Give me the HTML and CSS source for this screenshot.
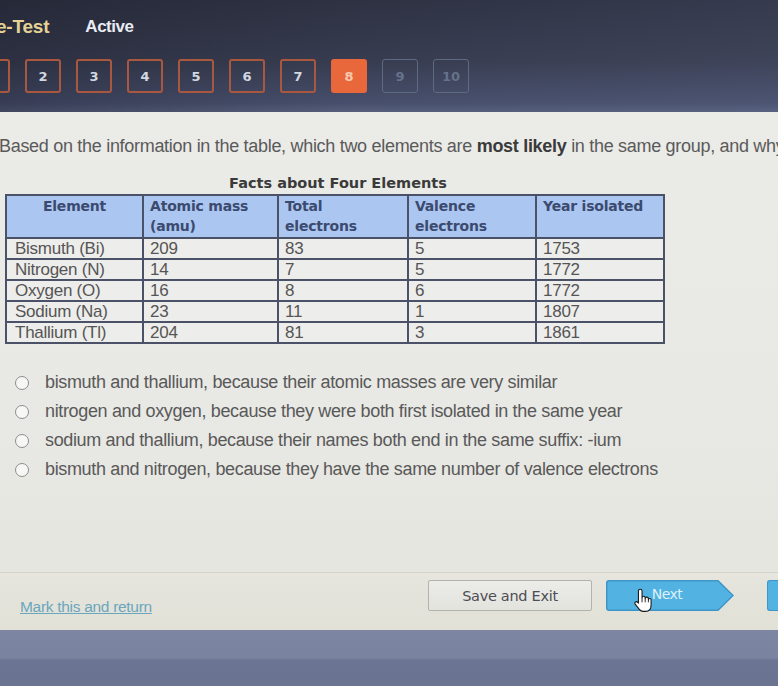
FILE: index.html
```html
<!DOCTYPE html>
<html>
<head>
<meta charset="utf-8">
<link rel="stylesheet" href="styles.css">
</head>
<body>
<div class="page">
  <header class="topbar">
    <div class="title-row">
      <span class="test-name">e-Test</span>
      <span class="status">Active</span>
    </div>
    <nav class="qnav">
      <span class="qbox">1</span>
      <span class="qbox">2</span>
      <span class="qbox">3</span>
      <span class="qbox">4</span>
      <span class="qbox">5</span>
      <span class="qbox">6</span>
      <span class="qbox">7</span>
      <span class="qbox current">8</span>
      <span class="qbox locked">9</span>
      <span class="qbox locked">10</span>
    </nav>
  </header>

  <main class="content">
    <p class="question">Based on the information in the table, which two elements are <b>most likely</b> in the same group, and why?</p>

    <div class="table-wrap">
      <div class="table-title">Facts about Four Elements</div>
      <table class="facts">
        <colgroup>
          <col class="w1"><col class="w2"><col class="w3"><col class="w4"><col class="w5">
        </colgroup>
        <thead>
          <tr>
            <th class="center">Element</th>
            <th>Atomic mass<br>(amu)</th>
            <th>Total<br>electrons</th>
            <th>Valence<br>electrons</th>
            <th>Year isolated</th>
          </tr>
        </thead>
        <tbody>
          <tr><td>Bismuth (Bi)</td><td>209</td><td>83</td><td>5</td><td>1753</td></tr>
          <tr><td>Nitrogen (N)</td><td>14</td><td>7</td><td>5</td><td>1772</td></tr>
          <tr><td>Oxygen (O)</td><td>16</td><td>8</td><td>6</td><td>1772</td></tr>
          <tr><td>Sodium (Na)</td><td>23</td><td>11</td><td>1</td><td>1807</td></tr>
          <tr><td>Thallium (Tl)</td><td>204</td><td>81</td><td>3</td><td>1861</td></tr>
        </tbody>
      </table>
    </div>

    <ul class="answers">
      <li><span class="radio"></span><span>bismuth and thallium, because their atomic masses are very similar</span></li>
      <li><span class="radio"></span><span>nitrogen and oxygen, because they were both first isolated in the same year</span></li>
      <li><span class="radio"></span><span>sodium and thallium, because their names both end in the same suffix: -ium</span></li>
      <li><span class="radio"></span><span>bismuth and nitrogen, because they have the same number of valence electrons</span></li>
    </ul>

    <div class="spacer"></div>

    <footer class="actions">
      <a class="mark" href="#">Mark this and return</a>
      <button class="btn-save">Save and Exit</button>
      <button class="btn-next">
        <svg class="next-shape" width="128" height="31" viewBox="0 0 128 31">
          <path d="M3 0.75 H112 L127 15.5 L112 30.25 H3 Q0.75 30.25 0.75 28 V3 Q0.75 0.75 3 0.75 Z" fill="#52b3e2" stroke="#3d95c8" stroke-width="1.5"/>
        </svg>
        <span class="next-label">Next</span>
        <svg class="cursor" width="19" height="25" viewBox="0 0 21 27">
          <path d="M6 3 A2 2 0 0 1 10 3 V10.5 A1.75 1.75 0 0 1 13.5 10.5 V11.5 A1.75 1.75 0 0 1 17 11.5 V12.8 A1.5 1.5 0 0 1 20 12.8 V18.5 C20 22.5 18 25.5 14 25.5 H11 C9 25.5 8 24.5 7 23.3 L2.4 17.6 C1.7 16.7 1.9 15.6 2.7 15.1 C3.5 14.6 4.6 14.8 5.3 15.6 L6 16.4 Z" fill="#fff" stroke="#1a1a1a" stroke-width="1.2" stroke-linejoin="round"/>
          <path d="M10 10.5 V15.5 M13.5 11.5 V15.5 M17 12.8 V15.5" stroke="#1a1a1a" stroke-width="1" fill="none"/>
        </svg>
      </button>
      <span class="btn-partial"></span>
    </footer>
  </main>

  <div class="below"></div>
</div>
</body>
</html>
```

FILE: styles.css
```css
html, body {
  margin: 0;
  padding: 0;
}
body {
  width: 778px;
  height: 686px;
  overflow: hidden;
  background: #6c7592;
  font-family: "Liberation Sans", Arial, sans-serif;
}
.page {
  display: flex;
  flex-direction: column;
  height: 686px;
}

/* ---------- top bar ---------- */
.topbar {
  height: 112px;
  flex: 0 0 112px;
  background:
    linear-gradient(90deg, rgba(20,22,34,0.35) 0%, rgba(20,22,34,0.05) 45%, rgba(90,100,130,0.15) 100%),
    linear-gradient(180deg, #2f3344 0%, #393e52 55%, #4a5270 92%, #59627f 100%);
  display: flex;
  flex-direction: column;
}
.title-row {
  height: 59px;
  display: flex;
  align-items: center;
  padding-bottom: 5px;
  box-sizing: border-box;
  font-weight: bold;
}
.test-name {
  margin-left: -4px;
  color: #e4d394;
  font-size: 19px;
  letter-spacing: -0.2px;
}
.status {
  margin-left: 36px;
  color: #e9ebf2;
  font-size: 17px;
  letter-spacing: -0.5px;
}
.qnav {
  display: flex;
  gap: 15px;
  margin-left: -26px;
}
.qbox {
  width: 36px;
  height: 34px;
  box-sizing: border-box;
  border: 2px solid #a9583f;
  border-radius: 3px;
  display: flex;
  align-items: center;
  justify-content: center;
  color: #d3d7e0;
  font-family: "DejaVu Sans", Verdana, sans-serif;
  font-weight: bold;
  font-size: 13px;
}
.qbox.current {
  background: #e8673b;
  border-color: #e8673b;
  color: #f6c7ae;
}
.qbox.locked {
  border-color: #5c6a82;
  color: #66728a;
  border-width: 1.5px;
}

/* ---------- content ---------- */
.content {
  flex: 0 0 518px;
  background: linear-gradient(180deg, #ebebe8 0%, #e8e8e4 60%, #e5e5df 100%);
  display: flex;
  flex-direction: column;
}
.question {
  margin: 0;
  padding-top: 23px;
  font-size: 18px;
  line-height: 22px;
  color: #5a5a5a;
  letter-spacing: -0.3px;
  white-space: nowrap;
  margin-left: -1px;
}
.question b {
  color: #3a3a3a;
}
.table-wrap {
  width: 658px;
  margin-left: 5px;
  margin-top: 17px;
}
.table-title {
  text-align: center;
  font-family: "DejaVu Sans", Verdana, sans-serif;
  font-size: 14.5px;
  font-weight: bold;
  color: #3a3a3a;
  line-height: 18px;
  margin-bottom: 2px;
  padding-left: 8px;
}
.facts {
  width: 658px;
  border-collapse: collapse;
  table-layout: fixed;
  border: 2px solid #4b5167;
}
.facts col.w1 { width: 137px; }
.facts col.w2 { width: 135px; }
.facts col.w3 { width: 130px; }
.facts col.w4 { width: 128px; }
.facts col.w5 { width: 128px; }
.facts th, .facts td {
  border: 2px solid #4b5167;
  text-align: left;
  vertical-align: top;
  overflow: hidden;
  white-space: nowrap;
}
.facts th {
  background: #abc6f1;
  color: #3b4a6e;
  font-family: "DejaVu Sans", Verdana, sans-serif;
  font-weight: bold;
  font-size: 14px;
  line-height: 20px;
  height: 40px;
  padding: 0 6px 1px 6px;
  letter-spacing: -0.2px;
}
.facts th.center {
  text-align: center;
}
.facts td {
  background: #ededeb;
  color: #555;
  font-size: 17px;
  line-height: 17px;
  height: 17px;
  padding: 1px 6px;
  letter-spacing: -0.25px;
}
.facts td:first-child {
  padding-left: 8px;
}

/* ---------- answers ---------- */
.answers {
  list-style: none;
  margin: 24px 0 0 0;
  padding: 0;
}
.answers li {
  height: 29px;
  display: flex;
  align-items: center;
  padding-left: 15px;
  font-size: 18px;
  color: #595959;
  letter-spacing: -0.35px;
}
.radio {
  width: 14px;
  height: 14px;
  box-sizing: border-box;
  border: 1.5px solid #8d8d8d;
  border-radius: 50%;
  background: #f7f7f5;
  margin-right: 16px;
  flex: 0 0 14px;
}
.spacer {
  flex: 1;
}

/* ---------- footer actions ---------- */
.actions {
  height: 58px;
  flex: 0 0 58px;
  box-sizing: border-box;
  border-top: 1px solid #d3d3cb;
  background: linear-gradient(180deg, #e6e5de 0%, #e2e1d7 100%);
  display: grid;
  grid-template-columns: 394px 164px 128px auto;
  column-gap: 14px;
  align-items: start;
  padding: 7px 0 0 20px;
}
.mark {
  margin-top: 18px;
  font-size: 15.5px;
  line-height: 18px;
  color: #6aa6bd;
  letter-spacing: -0.3px;
  text-decoration: underline;
}
.btn-save {
  height: 31px;
  box-sizing: border-box;
  border: 1px solid #b3b3ad;
  border-radius: 2px;
  background: linear-gradient(180deg, #ecece8 0%, #e3e3de 100%);
  color: #4d4d55;
  font-family: "DejaVu Sans", Verdana, sans-serif;
  font-size: 14.5px;
  padding: 0;
  letter-spacing: -0.3px;
}
.btn-next {
  position: relative;
  width: 128px;
  height: 31px;
  border: 0;
  padding: 0;
  background: none;
  display: flex;
  align-items: center;
  justify-content: center;
}
.next-shape {
  position: absolute;
  left: 0;
  top: 0;
}
.next-label {
  position: relative;
  color: #dff0f8;
  font-family: "DejaVu Sans", Verdana, sans-serif;
  font-size: 14px;
  margin-left: -6px;
  margin-top: -4px;
  letter-spacing: -0.5px;
}
.cursor {
  position: absolute;
  left: 27px;
  top: 8px;
}
.btn-partial {
  margin-left: 19px;
  width: 30px;
  height: 31px;
  box-sizing: border-box;
  border: 1.5px solid #3d95c8;
  border-right: 0;
  border-radius: 3px 0 0 3px;
  background: #52b3e2;
}

/* ---------- below ---------- */
.below {
  flex: 1;
  background: linear-gradient(180deg, #7c86a3 0%, #7a84a1 50%, #6b7492 54%, #6a7390 100%);
}
```
